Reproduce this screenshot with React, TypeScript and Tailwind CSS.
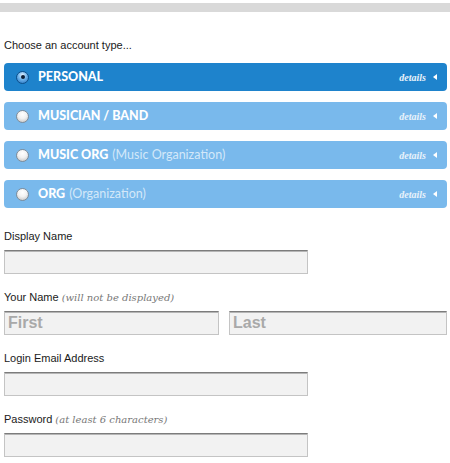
import React from "react";

type Account = {
  title: string;
  note?: string;
  active?: boolean;
};

const accounts: Account[] = [
  { title: "PERSONAL", active: true },
  { title: "MUSICIAN / BAND" },
  { title: "MUSIC ORG", note: "(Music Organization)" },
  { title: "ORG", note: "(Organization)" },
];

function Radio({ checked }: { checked?: boolean }) {
  if (checked) {
    return (
      <span className="flex h-[13px] w-[13px] items-center justify-center rounded-full border border-[#0d4f8a] bg-[radial-gradient(circle_at_50%_30%,#e6f3ff_0%,#6fb4ec_45%,#1f6fbf_100%)]">
        <span className="h-[4px] w-[4px] rounded-full bg-[#0b1c33]" />
      </span>
    );
  }
  return (
    <span className="block h-[13px] w-[13px] rounded-full border border-[#7f8c99] bg-[radial-gradient(circle_at_50%_30%,#ffffff_0%,#f2f2f2_45%,#bdbdbd_100%)]" />
  );
}

function AccountBar({ title, note, active }: Account) {
  return (
    <div
      className={
        "flex h-[28px] items-center rounded-[4px] pl-[12px] pr-[10px] " +
        (active ? "bg-[#1e83cc]" : "bg-[#79b9ec]")
      }
    >
      <Radio checked={active} />
      <span className="ml-[9px] text-[12.5px] font-black text-white [font-family:Lato,'Noto_Sans',sans-serif]">
        {title}
        {note && (
          <span className="ml-[4px] font-normal text-[#d3e8f9]">{note}</span>
        )}
      </span>
      <span className="ml-auto flex items-center gap-[7px]">
        <span className="text-[10px] italic font-bold text-[#eaf3fb] [font-family:'Liberation_Serif',serif]">
          details
        </span>
        <span className="h-0 w-0 border-y-[3.5px] border-r-[4px] border-y-transparent border-r-white" />
      </span>
    </div>
  );
}

function Label({ text, hint }: { text: string; hint?: string }) {
  return (
    <div className="mb-[7px] h-[13px] text-[11px] leading-[13px] text-[#1a1a1a]">
      {text}
      {hint && (
        <span className="ml-[3px] italic text-[#777] [font-family:'DejaVu_Serif',serif] text-[10px]">
          {hint}
        </span>
      )}
    </div>
  );
}

function Input({ placeholder }: { placeholder?: string }) {
  return (
    <input
      placeholder={placeholder}
      className="block h-[24px] w-full border border-[#c4c4c4] border-t-[#7c7c7c] bg-[#f2f2f2] px-[3px] text-[16px] font-bold shadow-[inset_0_1px_0_#b5b5b5] outline-none placeholder:text-[#a9a9a9]"
    />
  );
}

export default function App() {
  return (
    <div className="min-h-[463px] bg-white pt-[3px] [font-family:'Liberation_Sans',Arial,sans-serif]">
      <div className="h-[9px] bg-[#d9d9d9]" />
      <div className="pl-[4px] pr-[3px]">
        <p className="mt-[27px] text-[11px] leading-[13px] text-[#1a1a1a]">
          Choose an account type...
        </p>
        <div className="mt-[11px] flex flex-col gap-[11px]">
          {accounts.map((a) => (
            <AccountBar key={a.title} {...a} />
          ))}
        </div>

        <div className="mt-[22px] flex flex-col gap-[17px]">
          <div className="w-[304px]">
            <Label text="Display Name" />
            <Input />
          </div>
          <div>
            <Label text="Your Name" hint="(will not be displayed)" />
            <div className="flex gap-[10px]">
              <div className="w-[215px]">
                <Input placeholder="First" />
              </div>
              <div className="flex-1">
                <Input placeholder="Last" />
              </div>
            </div>
          </div>
          <div className="w-[304px]">
            <Label text="Login Email Address" />
            <Input />
          </div>
          <div className="w-[304px]">
            <Label text="Password" hint="(at least 6 characters)" />
            <Input />
          </div>
        </div>
      </div>
    </div>
  );
}
